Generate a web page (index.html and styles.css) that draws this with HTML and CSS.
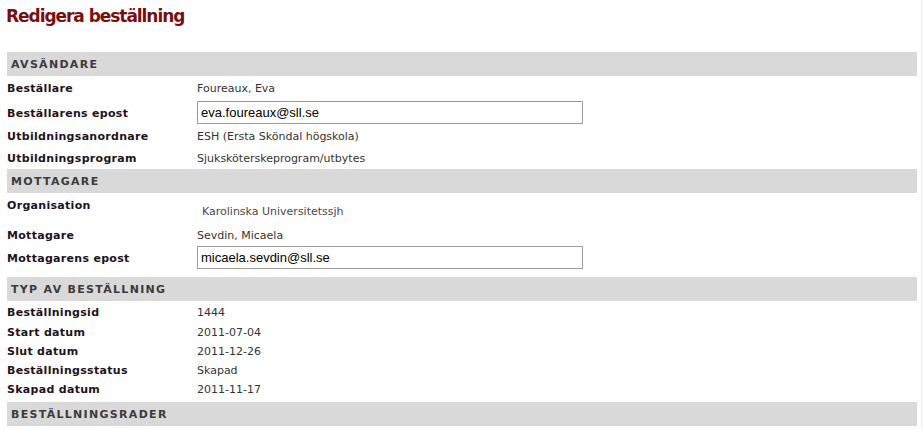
FILE: index.html
```html
<!DOCTYPE html>
<html lang="sv">
<head>
<meta charset="utf-8">
<title>Redigera beställning</title>
<link rel="stylesheet" href="styles.css">
</head>
<body>
<div class="page">
  <h1 class="title">Redigera beställning</h1>
  <div class="form">
    <div class="section">Avsändare</div>
    <div class="row h25 p6"><div class="lbl">Beställare</div><div class="val">Foureaux, Eva</div></div>
    <div class="row h24 p6 has-input"><div class="lbl">Beställarens epost</div><div class="val"><input class="field" type="text" value="eva.foureaux@sll.se"></div></div>
    <div class="row h23 p5"><div class="lbl">Utbildningsanordnare</div><div class="val">ESH (Ersta Sköndal högskola)</div></div>
    <div class="row h21 p4"><div class="lbl">Utbildningsprogram</div><div class="val">Sjuksköterskeprogram/utbytes</div></div>

    <div class="section">Mottagare</div>
    <div class="row h31 p6 org-row"><div class="lbl">Organisation</div><div class="val"><span class="org">Karolinska Universitetssjh</span></div></div>
    <div class="row h22 p5"><div class="lbl">Mottagare</div><div class="val">Sevdin, Micaela</div></div>
    <div class="row h31 p6 has-input"><div class="lbl">Mottagarens epost</div><div class="val"><input class="field" type="text" value="micaela.sevdin@sll.se"></div></div>

    <div class="section">Typ av beställning</div>
    <div class="row h21 p5"><div class="lbl">Beställningsid</div><div class="val">1444</div></div>
    <div class="row h19 p4"><div class="lbl">Start datum</div><div class="val">2011-07-04</div></div>
    <div class="row h19 p4"><div class="lbl">Slut datum</div><div class="val">2011-12-26</div></div>
    <div class="row h19 p4"><div class="lbl">Beställningsstatus</div><div class="val">Skapad</div></div>
    <div class="row h23 p4"><div class="lbl">Skapad datum</div><div class="val">2011-11-17</div></div>

    <div class="section">Beställningsrader</div>
  </div>
</div>
</body>
</html>
```

FILE: styles.css
```css
html, body {
  margin: 0;
  padding: 0;
  background: #ffffff;
}
body {
  font-family: "DejaVu Sans", Verdana, sans-serif;
  font-size: 11px;
  line-height: 13px;
  color: #333333;
}
.page {
  width: 914px;
  padding: 0 0 0 7px;
  border-right: 1px solid #eeeeee;
  min-height: 429px;
}
.title {
  margin: 0 0 0 -1px;
  padding: 6px 0 0 0;
  height: 52px;
  box-sizing: border-box;
  font-size: 17px;
  line-height: 20px;
  font-weight: bold;
  letter-spacing: -1.05px;
  color: #7a0f10;
}
.form {
  width: 910px;
  display: flex;
  flex-direction: column;
}
.section {
  height: 24px;
  box-sizing: border-box;
  padding: 6px 0 0 4px;
  background: #d9d9d9;
  font-weight: bold;
  text-transform: uppercase;
  letter-spacing: 1.3px;
  color: #3b3b3b;
}
.row {
  display: grid;
  grid-template-columns: 190px 1fr;
  align-items: start;
  box-sizing: border-box;
}
.h19 { height: 19px; }
.h21 { height: 21px; }
.h22 { height: 22px; }
.h23 { height: 23px; }
.h24 { height: 24px; }
.h25 { height: 25px; }
.h31 { height: 31px; }
.p4 > div { padding-top: 4px; }
.p5 > div { padding-top: 5px; }
.p6 > div { padding-top: 6px; }
.has-input > .val { padding-top: 0; }
.org-row > .val { padding-top: 12px; }
.lbl {
  font-weight: bold;
  letter-spacing: 0.3px;
  color: #1e1320;
}
.val {
  color: #333333;
}
.org {
  padding-left: 5px;
  color: #4a4a4a;
}
.field {
  display: block;
  width: 386px;
  height: 23px;
  box-sizing: border-box;
  margin: 0;
  padding: 0 3px;
  border: 1px solid #9c9c9c;
  font-family: "Liberation Sans", Arial, sans-serif;
  font-size: 13px;
  color: #000000;
  background: #ffffff;
  outline: none;
}
```
